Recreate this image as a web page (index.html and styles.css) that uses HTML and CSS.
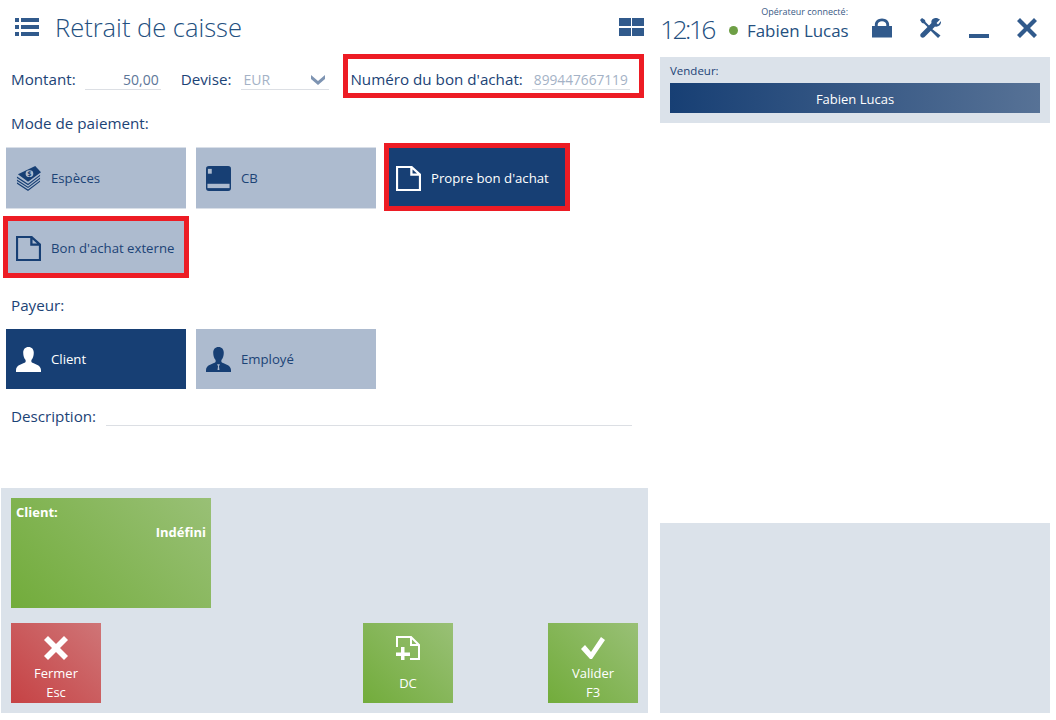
FILE: index.html
```html
<!DOCTYPE html>
<html lang="fr">
<head>
    <meta charset="UTF-8">
    <title>Retrait de caisse</title>
    <link rel="stylesheet" href="styles.css">
</head>
<body>
<div class="app">

    <div class="left-col">
        <!-- Title bar -->
        <div class="title-bar">
            <svg class="menu-icon" width="24" height="18" viewBox="0 0 24 18"><path d="M0 0h4v4H0zM6 0h18v4H6zM0 7h4v4H0zM6 7h18v4H6zM0 14h4v4H0zM6 14h18v4H6z"/></svg>
            <h1>Retrait de caisse</h1>
            <svg class="grid-icon" width="25" height="18" viewBox="0 0 25 18"><path d="M0 0h12v8H0zM13 0h12v8H13zM0 10h12v8H0zM13 10h12v8H13z"/></svg>
        </div>

        <div class="form">
            <div class="amount-row">
                <span class="label">Montant:</span>
                <span class="input input-amount">50,00</span>
                <span class="label label-devise">Devise:</span>
                <span class="input input-currency">EUR
                    <svg width="14" height="10" viewBox="0 0 14 10"><path d="M0 0l7 6 7-6v4l-7 6-7-6z"/></svg>
                </span>
                <div class="voucher-field marked">
                    <span class="label">Numéro du bon d'achat:</span>
                    <span class="input input-voucher">899447667119</span>
                </div>
            </div>

            <div class="label section-label">Mode de paiement:</div>
            <div class="tile-grid">
                <div class="pay-btn edged">
                    <svg viewBox="0 0 26 26"><path class="fill" d="M1 11 12.500 18.500 25 9V10.500L12.500 20 1 12.500zM1 14 12.500 21.500 25 12V13.500L12.500 23 1 15.500zM1 17 12.500 24.500 25 15V16.500L12.500 26 1 18.500z"/><path class="fill" d="M2 8.500 20 0 26 6.500 12.500 16.500z"/><ellipse cx="14" cy="8" rx="4" ry="3.500" fill="#adbbcf"/><text x="14" y="10.500" class="dollar">$</text></svg>
                    Espèces
                </div>
                <div class="pay-btn edged">
                    <svg viewBox="0 0 26 26"><rect class="fill" width="26" height="26" rx="3"/><rect x="2" y="3" width="4" height="5" fill="#adbbcf"/><rect x="1.500" y="18.500" width="23" height="4.500" fill="#adbbcf"/></svg>
                    CB
                </div>
                <div class="pay-btn active marked mark-own">
                    <svg viewBox="0 0 26 26"><path class="doc" d="M1 1h15l9 8v16H1zM16 1v8h9"/></svg>
                    Propre bon d'achat
                </div>
                <div class="pay-btn marked mark-external">
                    <svg viewBox="0 0 26 26"><path class="doc" d="M1 1h15l9 8v16H1zM16 1v8h9"/></svg>
                    Bon d'achat externe
                </div>
            </div>

            <div class="label section-label payer-label">Payeur:</div>
            <div class="tile-grid">
                <div class="pay-btn active">
                    <svg viewBox="0 0 26 26"><path class="fill" d="M13 0c3.500 0 5.500 2.500 5.500 6 0 3-1 6-2.500 7.500v2C18 17.500 26 18 26 24v2H0v-2c0-6 8-6.500 10-8.500v-2C8.500 12 7.500 9 7.500 6c0-3.500 2-6 5.500-6z"/></svg>
                    Client
                </div>
                <div class="pay-btn">
                    <svg viewBox="0 0 26 26"><path class="fill" d="M13 0c3.500 0 5.500 2.500 5.500 6 0 3-1 6-2.500 7.500v2C18 17.500 26 18 26 24v2H0v-2c0-6 8-6.500 10-8.500v-2C8.500 12 7.500 9 7.500 6c0-3.500 2-6 5.500-6z"/><path d="M11.500 18h3l-1 2 .5 4h-2l.5-4z" fill="#adbbcf"/></svg>
                    Employé
                </div>
            </div>

            <div class="description-row">
                <span class="label">Description:</span>
                <span class="input input-description"></span>
            </div>
        </div>

        <!-- Bottom action area -->
        <div class="action-panel">
            <div class="client-tile">
                <div class="client-title">Client:</div>
                <div class="client-value">Indéfini</div>
            </div>
            <div class="action-row">
                <div class="action-btn red">
                    <svg width="24" height="24" viewBox="0 0 24 24"><path d="M4 0l8 8 8-8 4 4-8 8 8 8-4 4-8-8-8 8-4-4 8-8-8-8z"/></svg>
                    <span>Fermer</span>
                    <span>Esc</span>
                </div>
                <div class="action-btn green dc">
                    <svg width="24" height="24" viewBox="0 0 24 24"><path class="doc-plus" d="M1 11V1h14l8 8v14H14M15 1v8h8"/><path d="M5 11h3.500v5.500H14V20H8.500v4H5v-4H0v-3.500h5z"/></svg>
                    <span class="dc-text">DC</span>
                </div>
                <div class="action-btn green confirm">
                    <svg width="24" height="24" viewBox="0 0 24 24"><path d="M0 13l4-4 6 7L20 1l4 3-13 19h-2z"/></svg>
                    <span>Valider</span>
                    <span>F3</span>
                </div>
            </div>
        </div>
    </div>

    <div class="right-col">
        <div class="status-bar">
            <span class="clock">12:16</span>
            <span class="status-dot"></span>
            <div class="operator">
                <span class="operator-label">Opérateur connecté:</span>
                <span class="operator-name">Fabien Lucas</span>
            </div>
            <div class="window-icons">
                <svg width="20" height="20" viewBox="0 0 21 20"><path d="M0 8h3V6.500C3 3 6 0 10.500 0S18 3 18 6.500V8h3v12H0zM6 8h9V6.500C15 4.500 13 3 10.500 3S6 4.500 6 6.500z"/></svg>
                <svg width="21" height="20" viewBox="0 0 21 20"><path d="M20 1.500 16.500 5 18 6.500 21 3C21.500 6.500 18.500 9.500 15 8.500L4.500 19C3.500 20 2 20 1 19S0 16.500 1 15.500L11.500 5C10.500 2 13.500-.5 17 0z"/><path d="M0 2 2 0 5 2 5.500 4 10 8.500 8.500 10 4 5.500 2 5zM11.500 10.500 20.500 17.500 18 20 10 12z"/></svg>
                <svg width="20" height="20" viewBox="0 0 20 20"><path d="M0 16h20v4H0z"/></svg>
                <svg width="20" height="20" viewBox="0 0 20 20"><path d="M3 0l7 7 7-7 3 3-7 7 7 7-3 3-7-7-7 7-3-3 7-7-7-7z"/></svg>
            </div>
        </div>
        <div class="seller-panel">
            <div class="seller-label">Vendeur:</div>
            <div class="seller-bar">Fabien Lucas</div>
        </div>
        <div class="right-spacer"></div>
        <div class="right-bottom"></div>
    </div>

</div>
</body>
</html>
```

FILE: styles.css
```css
/* Page */
body {
    margin: 0;
    background-color: #fff;
    font-family: "Open Sans", Arial, sans-serif;
    color: #1c4376;
}

.app {
    display: flex;
    width: 1050px;
    height: 713px;
    gap: 12px;
}

.left-col {
    width: 647px;
    margin-left: 1px;
    display: flex;
    flex-direction: column;
}

.right-col {
    width: 390px;
    display: flex;
    flex-direction: column;
}

/* Title bar */
.title-bar {
    display: flex;
    align-items: center;
    height: 57px;
    box-sizing: border-box;
    padding: 0 4px 3px 14px;
}

.title-bar h1 {
    margin: 0 0 0 16px;
    font-size: 25.5px;
    font-weight: 300;
    color: #24507f;
    flex: 1;
}

.menu-icon,
.grid-icon {
    fill: #315a8c;
}

/* Form */
.form {
    flex: 1;
}

.label {
    font-size: 15.2px;
    color: #1c4376;
}

.input {
    display: block;
    border-bottom: 1px solid #dcdfe4;
    font-size: 14px;
    color: #5d7698;
}

.amount-row {
    display: flex;
    align-items: center;
    height: 46px;
    padding-left: 10px;
    position: relative;
}

.amount-row .label {
    margin-bottom: 2px;
}

.input-amount {
    width: 76px;
    margin-left: 9px;
    padding-right: 2px;
    text-align: right;
    box-sizing: border-box;
}

.label-devise {
    margin-left: 20px;
}

.input-currency {
    width: 88px;
    margin-left: 10px;
    padding-left: 2px;
    display: flex;
    justify-content: space-between;
    align-items: center;
    padding-right: 4px;
    box-sizing: border-box;
    color: #a4b2c6;
}

.input-currency svg {
    fill: #7e94b2;
}

.voucher-field {
    display: flex;
    align-items: center;
    margin-left: 21px;
    position: relative;
}

.input-voucher {
    width: 98px;
    margin-left: 9px;
    padding-right: 2px;
    box-sizing: border-box;
    text-align: right;
    font-size: 13.7px;
    color: #a4b2c6;
}

/* Red marks on the screenshot */
.marked::after {
    content: "";
    position: absolute;
    border: 5px solid #ed1c24;
}

.voucher-field::after {
    top: -15px;
    bottom: -7px;
    left: -7px;
    right: -14px;
}

.mark-own::after {
    top: -5px;
    left: -2px;
    right: -4px;
    bottom: -3px;
}

.mark-external::after {
    top: -2px;
    left: -3px;
    right: -3px;
    bottom: 0;
}

.section-label {
    padding-left: 10px;
    height: 45px;
    line-height: 41px;
}

.payer-label {
    height: 51px;
    line-height: 54px;
}

.tile-grid {
    display: grid;
    grid-template-columns: repeat(3, 180px);
    grid-auto-rows: 60px;
    gap: 10px;
    padding-left: 5px;
}

.pay-btn {
    display: flex;
    align-items: center;
    gap: 10px;
    padding-left: 10px;
    position: relative;
    background-color: #adbbcf;
    font-size: 13.2px;
    color: #1c4376;
}

.pay-btn svg {
    width: 25px;
    height: 25px;
    flex: none;
}

.pay-btn.edged {
    box-shadow: 0 -1px 0 #d9dfe8, 0 1px 0 #d9dfe8;
}

.pay-btn .fill {
    fill: #173f74;
}

.pay-btn .doc {
    fill: none;
    stroke: #173f74;
    stroke-width: 2.4;
}

.pay-btn .dollar {
    font-size: 7px;
    font-weight: 700;
    text-anchor: middle;
    fill: #173f74;
}

.pay-btn.active {
    background-color: #173f74;
    color: #fff;
}

.pay-btn.active .fill {
    fill: #fff;
}

.pay-btn.active .doc {
    stroke: #fff;
}

.description-row {
    display: flex;
    align-items: center;
    height: 54px;
    padding: 0 16px 0 10px;
}

.input-description {
    flex: 1;
    margin: 18px 0 0 10px;
}

/* Bottom action area */
.action-panel {
    height: 225px;
    box-sizing: border-box;
    padding: 10px;
    background-color: #dbe2ea;
    display: flex;
    flex-direction: column;
}

.client-tile {
    width: 200px;
    height: 110px;
    box-sizing: border-box;
    padding: 5px 5px;
    background: linear-gradient(45deg, #72ac3b, #99c076);
    color: #fff;
    font-size: 13px;
    font-weight: 700;
}

.client-value {
    margin-top: 2px;
    text-align: right;
}

.action-row {
    display: flex;
    margin-top: 15px;
}

.action-btn {
    width: 90px;
    height: 80px;
    display: flex;
    flex-direction: column;
    align-items: center;
    padding-top: 13px;
    box-sizing: border-box;
    color: #fff;
    font-size: 13px;
    line-height: 19px;
}

.action-btn svg {
    fill: #fff;
    margin-bottom: 4px;
}

.action-btn.dc {
    margin-left: 262px;
}

.action-btn.confirm {
    margin-left: 95px;
}

.doc-plus {
    fill: none;
    stroke: #fff;
    stroke-width: 2;
}

.dc-text {
    margin-top: 10px;
}

.red {
    background: linear-gradient(45deg, #c64244, #cf7577);
}

.green {
    background: linear-gradient(45deg, #72ac3b, #99c076);
}

/* Right column */
.status-bar {
    display: flex;
    align-items: flex-end;
    height: 57px;
    box-sizing: border-box;
    padding-bottom: 13px;
}

.clock {
    font-size: 26.5px;
    font-weight: 300;
    letter-spacing: -2.6px;
    line-height: 30px;
    width: 69px;
    color: #24507f;
}

.status-dot {
    width: 9px;
    height: 9px;
    margin-bottom: 9px;
    border-radius: 50%;
    background-color: #6e9f45;
}

.operator {
    margin-left: 9px;
    width: 101px;
    position: relative;
}

.operator-label {
    position: absolute;
    right: 0;
    bottom: 26px;
    font-size: 9px;
    white-space: nowrap;
    color: #3a5a85;
}

.operator-name {
    font-size: 16.9px;
    white-space: nowrap;
    line-height: 26px;
    color: #24507f;
}

.window-icons {
    display: flex;
    gap: 28px;
    margin-left: 24px;
    margin-bottom: 6px;
}

.window-icons svg {
    fill: #315a8c;
    flex: none;
}

.seller-panel {
    height: 66px;
    box-sizing: border-box;
    padding: 6px 10px 10px;
    background-color: #dbe2ea;
}

.seller-label {
    font-size: 11.5px;
    line-height: 16px;
    height: 20px;
    color: #1c4376;
}

.seller-bar {
    height: 30px;
    line-height: 32px;
    text-align: center;
    font-size: 13px;
    color: #fff;
    background: linear-gradient(to right, #173f74, #577296);
}

.right-spacer {
    flex: 1;
}

.right-bottom {
    height: 190px;
    background-color: #dbe2ea;
}
```
